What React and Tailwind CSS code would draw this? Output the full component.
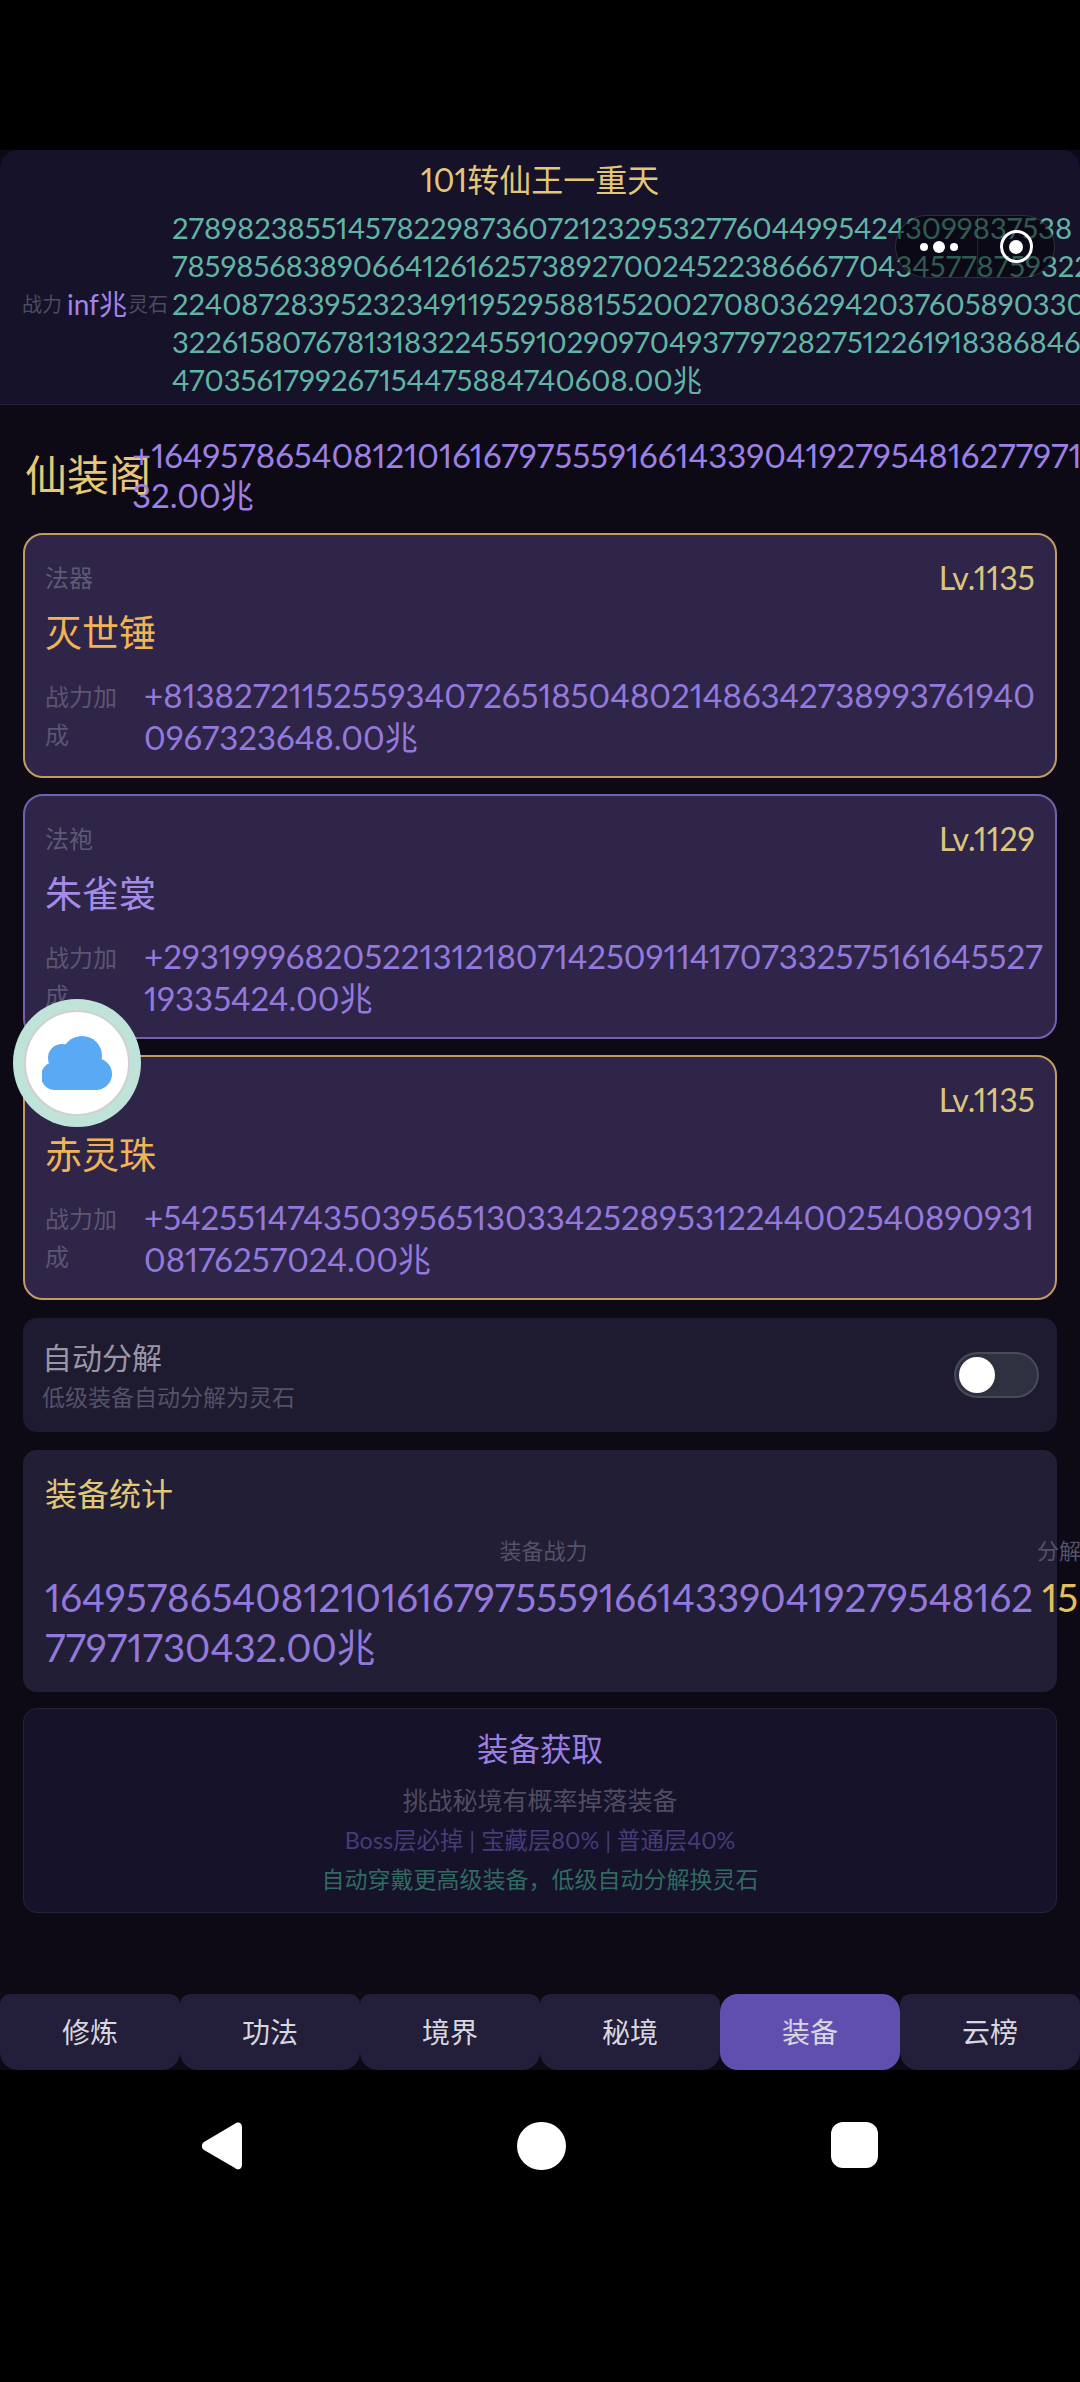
const font = { fontFamily: 'Lato, "Noto Sans CJK SC", sans-serif' };

const cards = [
  { type: '法器', lv: 'Lv.1135', name: '灭世锤', gold: true, v: ['+813827211525593407265185048021486342738993761940', '0967323648.00兆'] },
  { type: '法袍', lv: 'Lv.1129', name: '朱雀裳', gold: false, v: ['+29319996820522131218071425091141707332575161645527', '19335424.00兆'] },
  { type: '法宝', lv: 'Lv.1135', name: '赤灵珠', gold: true, v: ['+54255147435039565130334252895312244002540890931', '08176257024.00兆'] },
];

const tabs = ['修炼', '功法', '境界', '秘境', '装备', '云榜'];

function Card({ c }) {
  return (
    <div className={`h-[245px] rounded-[20px] border-2 bg-[#2e2549] px-[20px] pt-[26px] pb-[18px] ${c.gold ? 'border-[#c29c5e]' : 'border-[#7560b0]'}`}>
      <div className="flex h-[34px] items-center justify-between">
        <span className="text-[24px] text-[#5f5a72]">{c.type}</span>
        <span className="text-[32px] text-[#dcc47c]">{c.lv}</span>
      </div>
      <div className={`mt-[13px] text-[37px] leading-[50px] ${c.gold ? 'text-[#f0b356]' : 'text-[#a58be8]'}`}>{c.name}</div>
      <div className="mt-[16px] flex">
        <div className="mr-[19px] w-[80px] shrink-0 pt-[4px] text-[24px] leading-[38px] text-[#5c5670]">战力加成</div>
        <div className="whitespace-nowrap text-[33px] leading-[42px] text-[#9479dc]">
          {c.v[0]}<br />{c.v[1]}
        </div>
      </div>
    </div>
  );
}

export default function App() {
  return (
    <div style={font} className="proportional-nums relative flex h-[2382px] w-[1080px] flex-col overflow-hidden bg-black pt-[150px]">
      <div className="flex h-[1920px] flex-col bg-[#0d0a16]">
        <header className="h-[255px] shrink-0 rounded-t-[18px] border-b border-[#25223a] bg-[#15122a] pt-[10px]">
          <div className="text-center text-[32px] leading-[40px] text-[#e3c677]">101转仙王一重天</div>
          <div className="mt-[9px] flex items-center pl-[22px]">
            <span className="shrink-0 whitespace-nowrap text-[20px] text-[#4f4a60]">战力</span>
            <span className="ml-[5px] shrink-0 whitespace-nowrap text-[28px] text-[#a184e8]">inf兆</span>
            <span className="ml-[1px] shrink-0 whitespace-nowrap text-[20px] text-[#4f4a60]">灵石</span>
            <div className="ml-[4px] whitespace-nowrap text-[29.2px] leading-[38px] text-[#62b5a6]">
              2789823855145782298736072123295327760449954243099837538<br />
              78598568389066412616257389270024522386667704345778759322<br />
              2240872839523234911952958815520027080362942037605890330<br />
              322615807678131832245591029097049377972827512261918386846<br />
              4703561799267154475884740608.00兆
            </div>
          </div>
        </header>

        <main className="flex flex-1 flex-col px-[23px]">
          <div className="mt-[30px] flex h-[80px] items-center">
            <div className="w-[109px] shrink-0 whitespace-nowrap pl-[2px] text-[42px] text-[#e6c877]">仙装阁</div>
            <div className="whitespace-nowrap text-[33px] leading-[40px] text-[#9d80e6]">
              +164957865408121016167975559166143390419279548162779717304<br />32.00兆
            </div>
          </div>

          <div className="mt-[18px] flex flex-col gap-[16px]">
            {cards.map((c) => <Card key={c.name} c={c} />)}
          </div>

          <div className="mt-[18px] flex h-[114px] items-center justify-between rounded-[14px] bg-[#1e1a2f] pl-[19px] pr-[18px]">
            <div>
              <div className="text-[30px] leading-[40px] text-[#9a96a8]">自动分解</div>
              <div className="mt-[3px] text-[23px] leading-[34px] text-[#55516a]">低级装备自动分解为灵石</div>
            </div>
            <div className="flex h-[46px] w-[85px] items-center rounded-full border-2 border-[#474a58] bg-[#2e3140] pl-[3px]">
              <div className="h-[36px] w-[36px] rounded-full bg-white" />
            </div>
          </div>

          <section className="mt-[18px] h-[242px] rounded-[14px] bg-[#221e35] px-[22px] pt-[24px]">
            <div className="text-[32px] leading-[40px] text-[#e0c878]">装备统计</div>
            <div className="mt-[22px] flex">
              <div className="w-[997px] shrink-0">
                <div className="text-center text-[22px] leading-[30px] text-[#55516a]">装备战力</div>
                <div className="mt-[6px] whitespace-nowrap text-[38.5px] leading-[50px] text-[#9379dc]">
                  164957865408121016167975559166143390419279548162<br />77971730432.00兆
                </div>
              </div>
              <div className="shrink-0">
                <div className="-ml-[5px] whitespace-nowrap text-[22px] leading-[30px] text-[#55516a]">分解</div>
                <div className="mt-[6px] text-[38.5px] leading-[50px] text-[#e3c05c]">15</div>
              </div>
            </div>
          </section>

          <section className="mt-[16px] h-[205px] rounded-[14px] border border-[#25223a] bg-[#15122a] pt-[18px] text-center">
            <div className="text-[31.5px] leading-[44px] text-[#9b7fe0]">装备获取</div>
            <div className="mt-[11px] text-[25px] leading-[36px] text-[#4f4b60]">挑战秘境有概率掉落装备</div>
            <div className="mt-[4px] text-[23.4px] leading-[36px] text-[#473b78]">Boss层必掉 | 宝藏层80% | 普通层40%</div>
            <div className="mt-[3px] text-[23px] leading-[36px] text-[#2f6b60]">自动穿戴更高级装备，低级自动分解换灵石</div>
          </section>
        </main>

        <nav className="grid h-[76px] shrink-0 grid-cols-6">
          {tabs.map((t) => (
            <div
              key={t}
              className={`flex items-center justify-center text-[28px] text-[#d8d6de] ${t === '装备' ? 'rounded-[18px] bg-[#614fb0]' : 'rounded-t-[10px] rounded-b-[18px] bg-[#231e3a]'}`}
            >
              {t}
            </div>
          ))}
        </nav>
      </div>

      <div className="flex h-[150px] items-start pl-[202px] pt-[52px]">
        <svg width="40" height="48" viewBox="0 0 40 48" className="fill-white">
          <path d="M35 0.5 C38 0 40 2 40 5 L40 43 C40 47 36 49 33 46 L2 28 C-1 26 -1 22 2 20 Z" />
        </svg>
        <div className="ml-[275px] h-[48px] w-[49px] rounded-full bg-white" />
        <div className="ml-[265px] h-[46px] w-[47px] rounded-[12px] bg-white" />
      </div>

      <div className="absolute left-[895px] top-[215px] flex h-[63px] w-[160px] items-center rounded-full border border-white/15 bg-black/50">
        <div className="flex h-full w-[82px] items-center justify-center gap-[5px] border-r border-white/10 pl-[4px]">
          <span className="h-[8px] w-[8px] rounded-full bg-white" />
          <span className="h-[12px] w-[12px] rounded-full bg-white" />
          <span className="h-[8px] w-[8px] rounded-full bg-white" />
        </div>
        <div className="flex flex-1 items-center justify-center">
          <div className="flex h-[33px] w-[33px] items-center justify-center rounded-full border-[3px] border-white">
            <div className="h-[14px] w-[14px] rounded-full bg-white" />
          </div>
        </div>
      </div>

      <div className="absolute left-[13px] top-[999px] flex h-[128px] w-[128px] items-center justify-center rounded-full bg-[#bfe3d8]">
        <div className="flex h-[106px] w-[106px] items-center justify-center rounded-full border-2 border-[#d0d0d0] bg-white">
          <svg width="70" height="55" viewBox="0 0 70 55" className="fill-[#5aa9f5]">
            <circle cx="40" cy="20" r="20" />
            <circle cx="20" cy="22" r="14" />
            <circle cx="13" cy="40" r="14" />
            <circle cx="54" cy="38" r="16" />
            <rect x="11" y="28" width="45" height="26" />
          </svg>
        </div>
      </div>
    </div>
  );
}
